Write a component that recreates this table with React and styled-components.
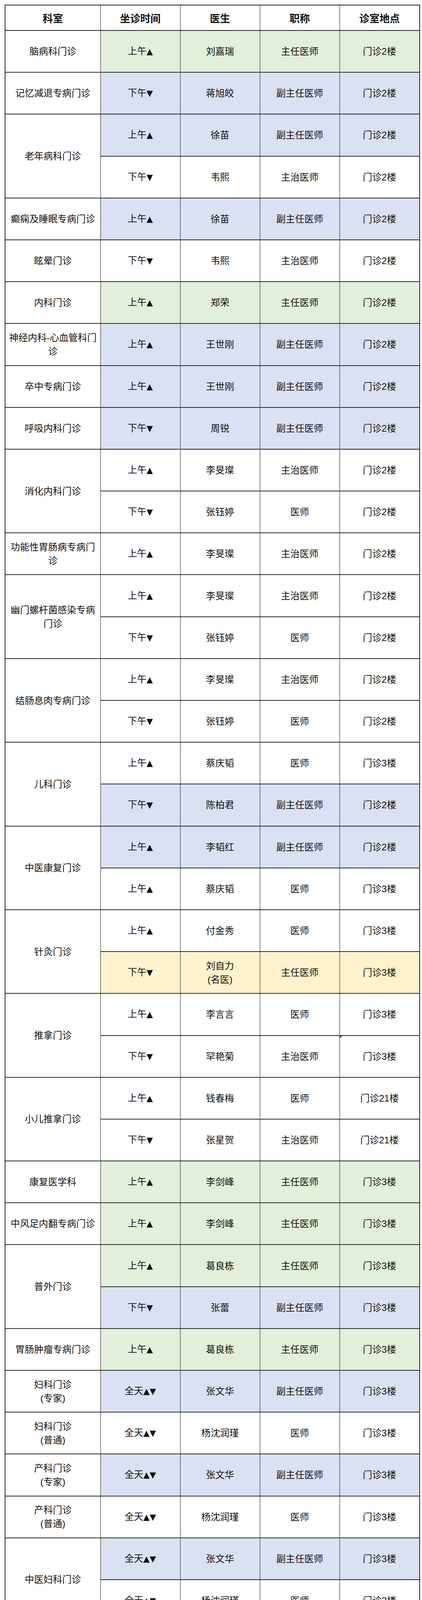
import React from "react";
import styled, { createGlobalStyle } from "styled-components";

const GlobalStyle = createGlobalStyle`
  html, body {
    margin: 0;
    padding: 0;
    background: #fff;
  }
  body {
    font-family: "Liberation Sans", "Noto Sans CJK SC", sans-serif;
    color: #111;
  }
`;

const Page = styled.div`
  padding: 12px 7px 12px 12px;
`;

const Table = styled.table`
  width: 1061px;
  table-layout: fixed;
  border-collapse: collapse;
  border: 2px solid #222;
`;

const HeadCell = styled.th`
  height: 63px;
  padding: 0;
  font-size: 26px;
  font-weight: 700;
  text-align: center;
  vertical-align: middle;
  border-left: 1px solid #111;
  border-right: 1px solid #111;
  border-bottom: 2px solid #222;
`;

const bgs = {
  green: "#e2efda",
  blue: "#d9e1f2",
  yellow: "#fff2cc",
};

const Cell = styled.td`
  position: relative;
  height: 105.2px;
  padding: 0 6px;
  font-size: 24px;
  line-height: 35px;
  text-align: center;
  vertical-align: middle;
  background: ${(p) => bgs[p.$bg] || "#fff"};
  border-left: 1px solid #111;
  border-right: 1px solid #111;
  border-top: 2px solid #2a2a2a;
  border-bottom: 2px solid #2a2a2a;

  ${(p) =>
    p.$flag &&
    `
    &::before {
      content: "";
      position: absolute;
      top: 0;
      left: 0;
      border-top: 6px solid #1f8f1f;
      border-right: 6px solid transparent;
    }
  `}
`;

const DeptCell = styled(Cell)`
  background: #fff;
`;

const Mark = styled.span`
  font-family: "DejaVu Sans", sans-serif;
  font-size: 21px;
`;

const SunIcon = styled.svg`
  width: 24px;
  height: 24px;
  vertical-align: -4px;
  margin-left: 1px;
`;

const Sun = () => {
  const pts = [];
  for (let i = 0; i < 24; i++) {
    const r = i % 2 === 0 ? 11.5 : 8.2;
    const a = (Math.PI * 2 * i) / 24;
    pts.push(`${(12 + r * Math.sin(a)).toFixed(2)},${(12 - r * Math.cos(a)).toFixed(2)}`);
  }
  return (
    <SunIcon viewBox="0 0 24 24">
      <polygon points={pts.join(" ")} fill="#f5c400" stroke="#7a5200" strokeWidth="0.8" />
      <circle cx="12" cy="12" r="6.6" fill="#ffd52a" stroke="#a06c00" strokeWidth="0.6" />
      <circle cx="9.6" cy="10.6" r="0.9" fill="#4a2e00" />
      <circle cx="14.4" cy="10.6" r="0.9" fill="#4a2e00" />
      <path d="M8.8 13.4 Q12 16.6 15.2 13.4" fill="none" stroke="#4a2e00" strokeWidth="1" strokeLinecap="round" />
    </SunIcon>
  );
};

const lines = (text) =>
  text.split("\n").map((part, i) => (
    <React.Fragment key={i}>
      {i > 0 && <br />}
      {part}
    </React.Fragment>
  ));

const Time = ({ text, sun }) => (
  <>
    {[...text].map((ch, i) =>
      ch === "▲" || ch === "▼" ? <Mark key={i}>{ch}</Mark> : <React.Fragment key={i}>{ch}</React.Fragment>
    )}
    {sun && <Sun />}
  </>
);

const G = "green";
const B = "blue";
const Y = "yellow";

const groups = [
  { dept: "脑病科门诊", rows: [["上午▲", "刘嘉瑞", "主任医师", "门诊2楼", G]] },
  { dept: "记忆减退专病门诊", rows: [["下午▼", "蒋旭皎", "副主任医师", "门诊2楼", B]] },
  {
    dept: "老年病科门诊",
    rows: [
      ["上午▲", "徐苗", "副主任医师", "门诊2楼", B],
      ["下午▼", "韦熙", "主治医师", "门诊2楼"],
    ],
  },
  { dept: "癫痫及睡眠专病门诊", rows: [["上午▲", "徐苗", "副主任医师", "门诊2楼", B]] },
  { dept: "眩晕门诊", rows: [["下午▼", "韦熙", "主治医师", "门诊2楼"]] },
  { dept: "内科门诊", rows: [["上午▲", "郑荣", "主任医师", "门诊2楼", G]] },
  { dept: "神经内科-心血管科门诊", rows: [["上午▲", "王世刚", "副主任医师", "门诊2楼", B]] },
  { dept: "卒中专病门诊", rows: [["上午▲", "王世刚", "副主任医师", "门诊2楼", B]] },
  { dept: "呼吸内科门诊", rows: [["下午▼", "周锐", "副主任医师", "门诊2楼", B]] },
  {
    dept: "消化内科门诊",
    rows: [
      ["上午▲", "李旻璨", "主治医师", "门诊2楼"],
      ["下午▼", "张钰婷", "医师", "门诊2楼"],
    ],
  },
  { dept: "功能性胃肠病专病门诊", rows: [["上午▲", "李旻璨", "主治医师", "门诊2楼"]] },
  {
    dept: "幽门螺杆菌感染专病门诊",
    rows: [
      ["上午▲", "李旻璨", "主治医师", "门诊2楼"],
      ["下午▼", "张钰婷", "医师", "门诊2楼"],
    ],
  },
  {
    dept: "结肠息肉专病门诊",
    rows: [
      ["上午▲", "李旻璨", "主治医师", "门诊2楼"],
      ["下午▼", "张钰婷", "医师", "门诊2楼"],
    ],
  },
  {
    dept: "儿科门诊",
    rows: [
      ["上午▲", "蔡庆韬", "医师", "门诊3楼"],
      ["下午▼", "陈柏君", "副主任医师", "门诊2楼", B],
    ],
  },
  {
    dept: "中医康复门诊",
    rows: [
      ["上午▲", "李韬红", "副主任医师", "门诊2楼", B],
      ["上午▲", "蔡庆韬", "医师", "门诊3楼"],
    ],
  },
  {
    dept: "针灸门诊",
    rows: [
      ["上午▲", "付金秀", "医师", "门诊3楼"],
      ["下午▼", "刘自力\n(名医)", "主任医师", "门诊3楼", Y],
    ],
  },
  {
    dept: "推拿门诊",
    rows: [
      ["上午▲", "李言言", "医师", "门诊3楼"],
      ["下午▼", "罕艳菊", "主治医师", "门诊3楼", null, "flag"],
    ],
  },
  {
    dept: "小儿推拿门诊",
    rows: [
      ["上午▲", "钱春梅", "医师", "门诊21楼"],
      ["下午▼", "张星贺", "主治医师", "门诊21楼"],
    ],
  },
  { dept: "康复医学科", rows: [["上午▲", "李剑峰", "主任医师", "门诊3楼", G]] },
  { dept: "中风足内翻专病门诊", rows: [["上午▲", "李剑峰", "主任医师", "门诊3楼", G]] },
  {
    dept: "普外门诊",
    rows: [
      ["上午▲", "葛良栋", "主任医师", "门诊3楼", G],
      ["下午▼", "张蕾", "副主任医师", "门诊3楼", B],
    ],
  },
  { dept: "胃肠肿瘤专病门诊", rows: [["上午▲", "葛良栋", "主任医师", "门诊3楼", G]] },
  { dept: "妇科门诊\n(专家)", rows: [["全天▲▼", "张文华", "副主任医师", "门诊3楼", B]] },
  { dept: "妇科门诊\n(普通)", rows: [["全天▲▼", "杨沈润瑾", "医师", "门诊3楼"]] },
  { dept: "产科门诊\n(专家)", rows: [["全天▲▼", "张文华", "副主任医师", "门诊3楼", B]] },
  { dept: "产科门诊\n(普通)", rows: [["全天▲▼", "杨沈润瑾", "医师", "门诊3楼"]] },
  {
    dept: "中医妇科门诊",
    rows: [
      ["全天▲▼", "张文华", "副主任医师", "门诊3楼", B],
      ["全天▲▼", "杨沈润瑾", "医师", "门诊3楼"],
    ],
  },
  { dept: "产后康复专病门诊", rows: [["全天▲▼", "张文华", "副主任医师", "门诊3楼", B]] },
  { dept: "更年期门诊", rows: [["全天▲▼", "张文华", "副主任医师", "门诊3楼", B]] },
  { dept: "眼科", rows: [["全天▲▼", "杨静晖", "医师", "门诊3楼"]] },
  {
    dept: "皮肤科",
    rows: [
      ["全天▲▼", "杨榆婷", "主治医师", "门诊3楼"],
      ["上午▲午间", "凡福青", "医师", "门诊3楼", null, "sun"],
    ],
  },
  { dept: "口腔科门诊", rows: [["全天▲▼", "斯那永次", "医师", "门诊4楼"]] },
  { dept: "骨伤科·疼痛科", rows: [["上午▲", "崔菁", "主治医师", "门诊3楼"]] },
  { dept: "减重门诊", rows: [["下午▼", "陈鸿", "主治医师", "门诊5楼"]] },
];

const widths = [244, 204, 204, 204, 205];
const heads = ["科室", "坐诊时间", "医生", "职称", "诊室地点"];

export default function App() {
  return (
    <Page>
      <GlobalStyle />
      <Table>
        <colgroup>
          {widths.map((w, i) => (
            <col key={i} style={{ width: w }} />
          ))}
        </colgroup>
        <thead>
          <tr>
            {heads.map((h) => (
              <HeadCell key={h}>{h}</HeadCell>
            ))}
          </tr>
        </thead>
        <tbody>
          {groups.map((g, gi) =>
            g.rows.map(([time, doctor, title, place, bg, extra], ri) => (
              <tr key={`${gi}-${ri}`}>
                {ri === 0 && <DeptCell rowSpan={g.rows.length}>{lines(g.dept)}</DeptCell>}
                <Cell $bg={bg}>
                  <Time text={time} sun={extra === "sun"} />
                </Cell>
                <Cell $bg={bg}>{lines(doctor)}</Cell>
                <Cell $bg={bg}>{title}</Cell>
                <Cell $bg={bg} $flag={extra === "flag"}>
                  {place}
                </Cell>
              </tr>
            ))
          )}
        </tbody>
      </Table>
    </Page>
  );
}
